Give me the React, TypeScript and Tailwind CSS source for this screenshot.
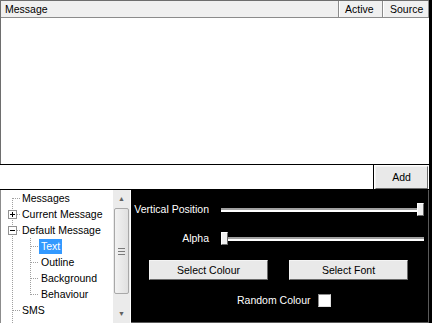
import React from "react";

type TreeRow = {
  label: string;
  level: 0 | 1;
  box?: "plus" | "minus";
  last?: boolean;
  selected?: boolean;
};

const rows: TreeRow[] = [
  { label: "Messages", level: 0 },
  { label: "Current Message", level: 0, box: "plus" },
  { label: "Default Message", level: 0, box: "minus" },
  { label: "Text", level: 1, selected: true },
  { label: "Outline", level: 1 },
  { label: "Background", level: 1 },
  { label: "Behaviour", level: 1, last: true },
  { label: "SMS", level: 0 },
  { label: "", level: 0 },
];

const Dots = ({ x1, y1, x2, y2 }: { x1: number; y1: number; x2: number; y2: number }) => (
  <line
    x1={x1}
    y1={y1}
    x2={x2}
    y2={y2}
    stroke="#a0a0a0"
    strokeWidth={1}
    strokeDasharray="1 1"
    shapeRendering="crispEdges"
  />
);

const Connector = ({ row, index }: { row: TreeRow; index: number }) => {
  const w = row.level === 0 ? 19 : 38;
  return (
    <svg width={w} height={16} className="shrink-0">
      {/* root vertical line */}
      <Dots x1={11.5} y1={index === 0 ? 8 : 0} x2={11.5} y2={16} />
      {row.level === 0 && row.label && <Dots x1={12} y1={8.5} x2={19} y2={8.5} />}
      {row.level === 1 && (
        <>
          <Dots x1={29.5} y1={0} x2={29.5} y2={row.last ? 9 : 16} />
          <Dots x1={30} y1={8.5} x2={37} y2={8.5} />
        </>
      )}
      {row.box && (
        <g shapeRendering="crispEdges">
          <rect x={7.5} y={4.5} width={8} height={8} fill="#fff" stroke="#919191" />
          <line x1={9} y1={8.5} x2={14} y2={8.5} stroke="#000" />
          {row.box === "plus" && <line x1={11.5} y1={6} x2={11.5} y2={11} stroke="#000" />}
        </g>
      )}
    </svg>
  );
};

const Slider = ({ at }: { at: "left" | "right" }) => {
  const thumb = (
    <div className="w-[7px] h-[13px] bg-[#f0f0f0] border border-t-white border-l-white border-r-[#696969] border-b-[#696969] shrink-0" />
  );
  const track = (
    <div className="flex-1 h-[4px] border-t-2 border-[#a0a0a0] bg-white" />
  );
  return (
    <div className="w-[203px] h-[13px] flex items-center">
      {at === "left" && thumb}
      {track}
      {at === "right" && thumb}
    </div>
  );
};

const Button = ({ label, className }: { label: string; className: string }) => (
  <div
    className={
      "flex items-center justify-center bg-[#e9e9e9] border border-[#f4f4f4] border-r-[#6b6b6b] border-b-[#6b6b6b] text-black " +
      className
    }
  >
    {label}
  </div>
);

export default function App() {
  return (
    <div className="w-[432px] h-[323px] bg-black flex flex-col overflow-hidden font-['Liberation_Sans',Arial,sans-serif] text-[10.5px] leading-none">
      {/* message list */}
      <div className="w-[429px] h-[164px] bg-white flex flex-col border-t border-l border-[#6e6e6e]">
        <div className="h-[17px] flex bg-[#f0f0f0] border-b border-[#8c8c8c] text-black">
          <div className="flex-1 flex items-center pl-[4px] border-r border-[#8c8c8c]">Message</div>
          <div className="w-[44px] flex items-center pl-[5px] border-r border-[#8c8c8c] border-l border-l-white">Active</div>
          <div className="w-[46px] flex items-center pl-[6px] border-l border-l-white border-r border-[#8c8c8c]">Source</div>
        </div>
        <div className="flex-1" />
      </div>

      {/* input row */}
      <div className="w-[429px] h-[24px] mt-[1px] flex">
        <div className="w-[373px] bg-white" />
        <div className="w-[1px] bg-black" />
        <div className="flex-1 bg-white p-[1px] pb-0">
          <Button label="Add" className="w-full h-full" />
        </div>
      </div>

      {/* bottom */}
      <div className="w-[429px] h-[133px] mt-[1px] flex">
        <div className="w-[131px] bg-white border-l border-[#8c8c8c] flex overflow-hidden">
          <div className="flex-1 flex flex-col">
            {rows.map((row, i) => (
              <div key={i} className="h-[16px] flex items-center shrink-0">
                <Connector row={row} index={i} />
                {row.label && (
                  <span
                    className={
                      "px-[2px] h-[15px] flex items-center " +
                      (row.selected ? "bg-[#3399ff] text-white" : "text-black")
                    }
                  >
                    {row.label}
                  </span>
                )}
              </div>
            ))}
          </div>
          {/* scrollbar */}
          <div className="w-[17px] bg-[#ebebeb] flex flex-col items-center mr-[1px]">
            <div className="h-[16px] flex items-center justify-center text-[7px] text-[#606060]">▲</div>
            <div className="w-[15px] h-[86px] mt-[2px] bg-gradient-to-r from-[#f2f2f2] to-[#e0e0e0] border border-[#a8a8a8] rounded-[2px] flex flex-col items-center justify-center gap-[2px]">
              <div className="w-[7px] h-[1px] bg-[#7a7a7a]" />
              <div className="w-[7px] h-[1px] bg-[#7a7a7a]" />
              <div className="w-[7px] h-[1px] bg-[#7a7a7a]" />
            </div>
            <div className="flex-1" />
            <div className="h-[16px] flex items-center justify-center text-[7px] text-[#606060] mb-[2px]">▼</div>
          </div>
        </div>

        <div className="flex-1 bg-black border-r border-b border-[#5a5a5a] text-white flex flex-col">
          <div className="h-[13px] mt-[13px] flex items-center">
            <div className="w-[78px] text-right">Vertical Position</div>
            <div className="ml-[12px]">
              <Slider at="right" />
            </div>
          </div>
          <div className="h-[13px] mt-[16px] flex items-center">
            <div className="w-[78px] text-right">Alpha</div>
            <div className="ml-[12px]">
              <Slider at="left" />
            </div>
          </div>
          <div className="flex mt-[15px] pl-[18px] gap-[21px]">
            <Button label="Select Colour" className="w-[119px] h-[20px]" />
            <Button label="Select Font" className="w-[119px] h-[20px]" />
          </div>
          <div className="flex items-center mt-[13px] pl-[106px] h-[14px]">
            <span>Random Colour</span>
            <div className="w-[13px] h-[13px] ml-[7px] bg-white border border-[#8c8c8c] border-r-[#e0e0e0] border-b-[#e0e0e0]" />
          </div>
        </div>
      </div>
    </div>
  );
}
